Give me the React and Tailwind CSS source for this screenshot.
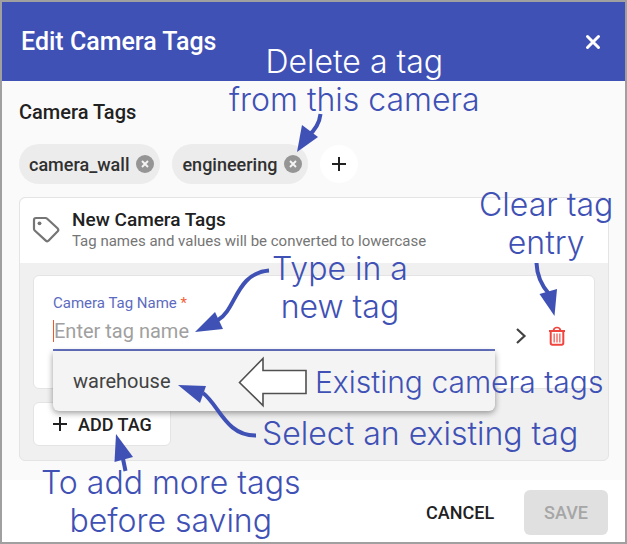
import React, { useState } from 'react';

const initialTags = ['camera_wall', 'engineering'];

function PlusIcon() {
  return (
    <svg width="16" height="16" viewBox="0 0 16 16" fill="none" stroke="currentColor" strokeWidth="2" aria-hidden="true">
      <path d="M8 1v14M1 8h14" />
    </svg>
  );
}

function TagIcon() {
  return (
    <svg className="shrink-0" width="28" height="28" viewBox="0 0 28 28" fill="none" stroke="#757575" strokeWidth="2.200" strokeLinejoin="round" aria-hidden="true">
      <path d="M4 2h9.500q1 0 1.700.7l10.300 9.600q1.500 1.500.2 3l-9 9.300q-1.400 1.400-2.900 0L2.700 14.500Q2 13.800 2 12.800V4q0-2 2-2z" />
      <circle cx="7.500" cy="7.300" r="1.900" fill="#757575" stroke="none" />
    </svg>
  );
}

function TrashIcon() {
  return (
    <svg width="18" height="20" viewBox="0 0 18 20" fill="none" stroke="#f0453f" aria-hidden="true">
      <path d="M1 5h16" strokeWidth="2" />
      <path d="M5.500 4.500Q6 1.500 9 1.500t3.500 3" strokeWidth="1.700" />
      <path d="M2.700 5.500V17q0 1.700 1.700 1.700h9.200q1.700 0 1.700-1.700V5.500" strokeWidth="2" />
      <path d="M6.200 7.500v9M9 7.500v9M11.800 7.500v9" strokeWidth="1.600" opacity="0.7" />
    </svg>
  );
}

function Chip({ name, onDelete }) {
  return (
    <li className="flex h-10 items-center gap-[7px] rounded-full bg-[#ececec] pr-1.5 pl-2.5 text-[18px] font-medium text-[#303030]">
      {name}
      <button type="button" onClick={onDelete} aria-label={`Remove ${name}`}>
        <svg width="18" height="18" viewBox="0 0 18 18" aria-hidden="true">
          <circle cx="9" cy="9" r="9" fill="#959595" />
          <path d="M6 6l6 6M12 6l-6 6" stroke="#f5f5f5" strokeWidth="1.900" />
        </svg>
      </button>
    </li>
  );
}

// Help notes drawn over the dialog
function Annotations() {
  const note = 'absolute text-center whitespace-nowrap';
  return (
    <div className="pointer-events-none absolute inset-0 font-['Inter',sans-serif] text-[32px] leading-[38px] font-light text-[#3f51b5]">
      <svg className="absolute top-0 left-0" width="627" height="544" viewBox="0 0 627 544" fill="none" aria-hidden="true">
        <g stroke="#3f51b5" strokeWidth="4">
          <path d="M320.500 114Q319 127 308 136" />
          <path d="M536.500 263Q537 280 549 294" />
          <path d="M269 270.500C236 273 236 310 218 320" />
          <path d="M256 435.500C226 436 219 405 203 393" />
          <path d="M125.500 471L122 454" />
        </g>
        <g fill="#3f51b5">
          <path d="M297 152L302 125 318 137z" />
          <path d="M554.500 316L539.500 294 557 289z" />
          <path d="M195 332L215 312 223 329z" />
          <path d="M178 385L206 386 200 403z" />
          <path d="M116 434L133 457 114.500 462z" />
        </g>
        <path d="M239.500 382.500L263 358.500V370.500H306V393.500H263V405.500z" fill="#fff" stroke="#505050" strokeWidth="1.600" />
      </svg>
      <p className={`${note} top-[43px] left-[229px]`}>
        <span className="text-white">Delete a tag</span><br />from this camera
      </p>
      <p className={`${note} top-[186px] left-[479px]`}>Clear tag<br />entry</p>
      <p className={`${note} top-[250px] left-[272px]`}>Type in a<br />new tag</p>
      <p className={`${note} top-[363px] left-[315px] text-[30px]`}>Existing camera tags</p>
      <p className={`${note} top-[415px] left-[262px]`}>Select an existing tag</p>
      <p className={`${note} top-[464px] left-[41px]`}>To add more tags<br />before saving</p>
    </div>
  );
}

export default function App() {
  const [tags, setTags] = useState(initialTags);
  const [tagName, setTagName] = useState('');

  return (
    <div className="relative overflow-hidden">
      <div className="border-2 border-[#a0a0a0] bg-white font-['Roboto',sans-serif] text-[#212121]">
        <header className="flex items-center justify-between bg-[#3f51b5] py-5 pr-[23px] pl-[19px] text-white">
          <h1 className="text-[25px] leading-[39px] font-medium">Edit Camera Tags</h1>
          <button type="button" aria-label="Close">
            <svg width="18" height="18" viewBox="0 0 18 18" stroke="currentColor" strokeWidth="3" strokeLinecap="round" aria-hidden="true">
              <path d="M3.500 3.500l11 11M14.500 3.500l-11 11" />
            </svg>
          </button>
        </header>

        <main className="bg-[#fafafa] pt-[19px] pr-4 pb-[19px] pl-[17px]">
          <h2 className="text-[20px] leading-6 font-medium">Camera Tags</h2>
          <ul className="mt-5 flex items-center gap-3">
            {tags.map((tag) => (
              <Chip key={tag} name={tag} onDelete={() => setTags(tags.filter((t) => t !== tag))} />
            ))}
            <li>
              <button type="button" aria-label="Add tag" className="flex size-[38px] items-center justify-center rounded-full bg-white">
                <PlusIcon />
              </button>
            </li>
          </ul>

          <section className="mt-[13px] rounded-md border border-[#e4e4e4] bg-[#f0f0f0]">
            <div className="flex items-center gap-3 rounded-t-md bg-white pt-[11px] pb-3 pl-3">
              <TagIcon />
              <div>
                <h3 className="text-[19px] leading-[22px] font-medium">New Camera Tags</h3>
                <p className="text-[15px] leading-5 text-[#757575]">Tag names and values will be converted to lowercase</p>
              </div>
            </div>

            <div className="px-[13px] pt-3 pb-[14px]">
              <div className="flex h-[114px] items-start rounded-md border border-[#e4e4e4] bg-white pt-[18px] pr-7 pl-[19px]">
                <div className="relative flex-1">
                  <label htmlFor="tag-name" className="block text-[15px] leading-[19px] text-[#5c6bc0]">
                    Camera Tag Name <span className="text-[#f4623a]">*</span>
                  </label>
                  <div className="flex h-[38px] items-center border-b-2 border-[#6573c3]">
                    <span className="h-[22px] w-px shrink-0 bg-[#f0552d]" />
                    <input
                      id="tag-name"
                      type="text"
                      value={tagName}
                      onChange={(e) => setTagName(e.target.value)}
                      placeholder="Enter tag name"
                      className="w-full text-[20px] leading-6 outline-none placeholder:text-[#a0a0a0]"
                    />
                  </div>
                  <ul className="absolute top-full w-full rounded-b-md bg-[#f4f4f4] shadow-[0_2px_6px_rgba(0,0,0,0.4)]">
                    <li>
                      <button type="button" onClick={() => setTagName('warehouse')} className="w-full px-5 text-left text-[20px] leading-[60px] text-[#424242]">
                        warehouse
                      </button>
                    </li>
                  </ul>
                </div>
                <div className="ml-5 flex items-center gap-[21px] pt-8">
                  <button type="button" aria-label="Expand">
                    <svg width="12" height="20" viewBox="0 0 12 20" fill="none" stroke="#424242" strokeWidth="2.200" aria-hidden="true">
                      <path d="M2 3l7.500 7L2 17" />
                    </svg>
                  </button>
                  <button type="button" aria-label="Clear tag entry" onClick={() => setTagName('')}>
                    <TrashIcon />
                  </button>
                </div>
              </div>
              <button type="button" className="mt-[13px] flex h-11 items-center gap-2.5 rounded-md border border-[#e4e4e4] bg-white px-[18px] text-[18px] font-medium">
                <PlusIcon />
                ADD TAG
              </button>
            </div>
          </section>
        </main>

        <footer className="flex items-center justify-end gap-[30px] bg-white px-[17px] pt-2.5 pb-[7px] text-[18px] font-medium">
          <button type="button">CANCEL</button>
          <button type="button" disabled className="h-[45px] rounded-md bg-[#e0e0e0] px-5 text-[#a6a6a6]">SAVE</button>
        </footer>
      </div>

      <Annotations />
    </div>
  );
}
